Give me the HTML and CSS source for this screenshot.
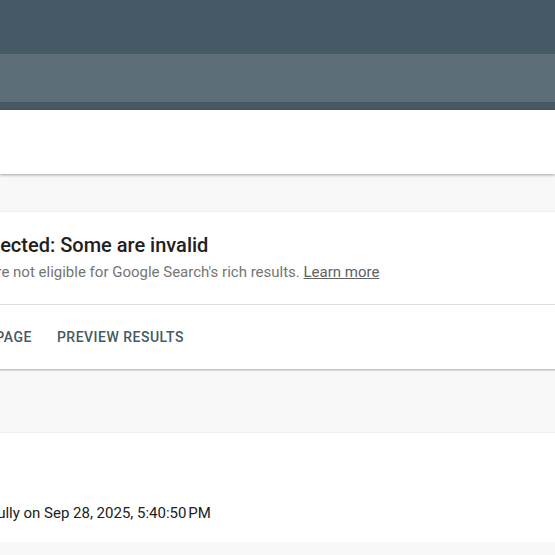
FILE: index.html
```html
<!DOCTYPE html>
<html lang="en">
  <head>
    <meta charset="UTF-8" />
    <meta name="viewport" content="width=device-width, initial-scale=1.0" />
    <title>Rich Results Test</title>
    <link rel="stylesheet" href="styles.css">
  </head>
  <body>
    <header class="appbar"></header>
    <div class="toolbar"></div>
    <div class="strip"></div>
    <div class="urlbar"></div>
    <main class="main">
      <section class="card">
        <div class="summary">
          <h2 class="title">4 items detected: Some are invalid</h2>
          <p class="subtitle">Those items are not eligible for Google Search's rich results. <a href="#">Learn more</a></p>
        </div>
        <div class="actions">
          <button class="btn">View tested page</button>
          <button class="btn">Preview results</button>
        </div>
      </section>
      <section class="card status">
        <p class="crawl">Crawled successfully on Sep 28, 2025, 5:40:50&#8239;PM</p>
      </section>
    </main>
  </body>
</html>
```

FILE: styles.css
```css
body {
  margin: 0;
  background-color: #f8f8f8;
  font-family: Roboto, 'Noto Sans', sans-serif;
  overflow: hidden;
}
.appbar {
  height: 54px;
  background-color: #465a65;
}
.toolbar {
  height: 48px;
  background-color: #5d6e78;
}
.strip {
  height: 8px;
  background-color: #465a65;
}
.urlbar {
  height: 64px;
  background-color: #fff;
  box-shadow: 0 1px 3px rgba(0, 0, 0, 0.35);
  position: relative;
}
.main {
  margin-left: -124px;
  margin-right: -40px;
  padding-top: 38px;
  display: flex;
  flex-direction: column;
  gap: 64px;
}
.card {
  background-color: #fff;
  box-shadow: 0 0 1px rgba(0, 0, 0, 0.12), 0 1px 2px rgba(0, 0, 0, 0.3);
}
.summary {
  padding: 20px 24px 22px;
  border-bottom: 1px solid #e0e0e0;
}
.title {
  margin: 0;
  font-size: 20px;
  font-weight: 500;
  color: #212121;
  line-height: 26px;
}
.subtitle {
  margin: 4px 0 0;
  text-indent: 2px;
  font-size: 15px;
  color: #757575;
  line-height: 20px;
}
.subtitle a {
  color: #616161;
}
.actions {
  display: flex;
  gap: 9px;
  padding: 0 15px;
  height: 64px;
  align-items: center;
}
.btn {
  background: none;
  border: none;
  padding: 8px;
  font-family: inherit;
  font-size: 14px;
  font-weight: 500;
  letter-spacing: 0.5px;
  text-transform: uppercase;
  color: #455a64;
}
.status {
  height: 109px;
  padding: 0 24px 0 3px;
  display: flex;
  align-items: flex-end;
}
.crawl {
  margin: 0 0 19px;
  font-size: 15px;
  color: #212121;
  line-height: 20px;
}
```
